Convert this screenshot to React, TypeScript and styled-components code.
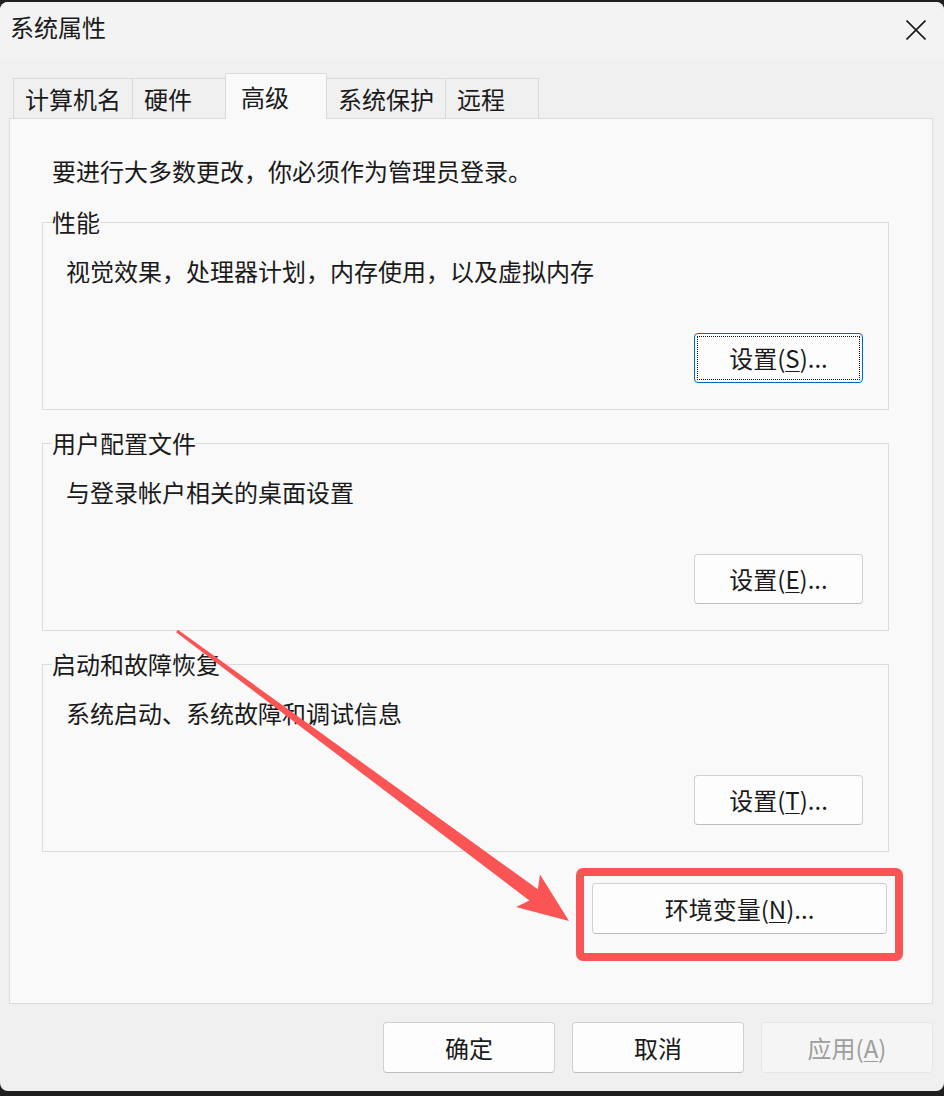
import React from 'react'
import styled, { createGlobalStyle } from 'styled-components'

const GlobalStyle = createGlobalStyle`
  html, body {
    margin: 0;
    padding: 0;
    background: #1f1f1f;
  }
  body {
    font-family: "Noto Sans CJK SC", "Microsoft YaHei", sans-serif;
    color: #1a1a1a;
  }
  * {
    box-sizing: border-box;
  }
`

const tabs = ['计算机名', '硬件', '高级', '系统保护', '远程']

const groups = [
  { title: '性能', desc: '视觉效果，处理器计划，内存使用，以及虚拟内存', key: 'S', focused: true },
  { title: '用户配置文件', desc: '与登录帐户相关的桌面设置', key: 'E' },
  { title: '启动和故障恢复', desc: '系统启动、系统故障和调试信息', key: 'T' },
]

function CloseIcon() {
  return (
    <svg width="20" height="20" viewBox="0 0 20 20">
      <path d="M0.5 0.5 L19.5 19.5 M19.5 0.5 L0.5 19.5" stroke="#1a1a1a" strokeWidth="1.6" />
    </svg>
  )
}

// red callout: tapered arrow + box round the env-vars button
function Callout() {
  return (
    <Overlay width="944" height="1096" viewBox="0 0 944 1096">
      <polygon
        points="176.1,632.2 529.4,900.4 516,907 569,921 540,874.5 537.8,889.2 177.9,629.8"
        fill="#fb5454"
      />
      <rect x="580" y="872" width="319" height="85" rx="3" fill="none" stroke="#fb5454" strokeWidth="8" />
    </Overlay>
  )
}

export default function App() {
  return (
    <Stage>
      <GlobalStyle />
      <Window>
        <TitleBar>
          <Title>系统属性</Title>
          <CloseIcon />
        </TitleBar>
        <Body>
          <TabRow>
            {tabs.map((t, i) => (
              <Tab key={t} $active={i === 2}>
                {t}
              </Tab>
            ))}
          </TabRow>
          <Panel>
            <Intro>要进行大多数更改，你必须作为管理员登录。</Intro>
            {groups.map((g, i) => (
              <Group key={g.title} $last={i === groups.length - 1}>
                <Legend>{g.title}</Legend>
                <Desc>{g.desc}</Desc>
                <ButtonRow>
                  <Button $w={169} $h={50} $focused={g.focused}>
                    设置(<Key>{g.key}</Key>)...
                  </Button>
                </ButtonRow>
              </Group>
            ))}
            <EnvRow>
              <Button $w={295} $h={51}>
                环境变量(<Key>N</Key>)...
              </Button>
            </EnvRow>
          </Panel>
          <Footer>
            <Button $w={172} $h={51}>确定</Button>
            <Button $w={172} $h={51}>取消</Button>
            <Button $w={172} $h={51} $disabled>
              应用(<Key>A</Key>)
            </Button>
          </Footer>
        </Body>
      </Window>
      <Callout />
    </Stage>
  )
}

const Stage = styled.div`
  position: relative;
  width: 944px;
  height: 1096px;
  padding-top: 2px;
  overflow: hidden;
`

const Window = styled.div`
  height: 1089px;
  background: #f0f0f0;
  border-radius: 8px;
  overflow: hidden;
  display: flex;
  flex-direction: column;
`

const TitleBar = styled.div`
  height: 55px;
  flex: none;
  background: #f3f3f3;
  display: flex;
  align-items: center;
  justify-content: space-between;
  padding: 0 18px 0 10px;
  font-size: 24px;
  line-height: 1;
`

const Title = styled.span`
  margin-top: -5px;
`

const Body = styled.div`
  flex: 1;
  padding: 16px 11px 0 9px;
  display: flex;
  flex-direction: column;
`

const TabRow = styled.div`
  position: relative;
  z-index: 1;
  display: flex;
  align-items: flex-end;
  height: 46px;
  margin-bottom: -1px;
  padding-left: 4px;
`

const Tab = styled.div<{ $active?: boolean }>`
  display: flex;
  align-items: center;
  height: ${p => (p.$active ? 46 : 40)}px;
  margin-bottom: ${p => (p.$active ? 0 : 1)}px;
  min-width: ${p => (p.$active ? 102 : 94)}px;
  padding: 0 11px 0 ${p => (p.$active ? 15 : 11)}px;
  border: 1px solid #dadada;
  border-bottom: none;
  background: ${p => (p.$active ? '#f9f9f9' : '#f0f0f0')};
  font-size: 24px;
  line-height: 1;

  & + & {
    margin-left: -1px;
  }
`

const Panel = styled.div`
  height: 886px;
  background: #f9f9f9;
  border: 1px solid #dcdcdc;
  padding: 36px 43px 0 32px;
`

const Intro = styled.div`
  font-size: 24px;
  line-height: 32px;
  padding-left: 10px;
  margin-bottom: 23px;
`

const Group = styled.fieldset<{ $last?: boolean }>`
  margin: 0 0 ${p => (p.$last ? 31 : 21)}px;
  padding: 0 0 26px;
  min-width: 0;
  border: 1px solid #dcdcdc;
`

const Legend = styled.legend`
  padding: 0;
  margin-left: 9px;
  font-size: 24px;
  line-height: 24px;
`

const Desc = styled.div`
  margin: 21px 0 0 23px;
  font-size: 24px;
  line-height: 32px;
`

const ButtonRow = styled.div`
  display: flex;
  justify-content: flex-end;
  margin-top: 46px;
  padding-right: 25px;
`

const EnvRow = styled.div`
  display: flex;
  justify-content: flex-end;
  padding-right: 2px;
`

const Button = styled.div<{ $w: number; $h: number; $focused?: boolean; $disabled?: boolean }>`
  width: ${p => p.$w}px;
  height: ${p => p.$h}px;
  display: flex;
  align-items: center;
  justify-content: center;
  border: 1px solid ${p => (p.$focused ? '#0067c0' : p.$disabled ? '#e6e6e6' : '#d0d0d0')};
  border-bottom-color: ${p => (p.$focused ? '#0067c0' : p.$disabled ? '#e6e6e6' : '#bdbdbd')};
  border-radius: 4px;
  background: ${p => (p.$disabled ? '#f5f5f5' : '#fdfdfd')};
  color: ${p => (p.$disabled ? '#9e9e9e' : '#1a1a1a')};
  font-size: 24px;
  line-height: 1;
  ${p =>
    p.$focused &&
    `
    outline: 1px dotted #111;
    outline-offset: -4px;
  `}
`

const Key = styled.span`
  text-decoration: underline;
  text-underline-offset: 3px;
  text-decoration-thickness: 1px;
`

const Footer = styled.div`
  display: flex;
  justify-content: flex-end;
  gap: 17px;
  margin-top: 18px;
`

const Overlay = styled.svg`
  position: absolute;
  top: 0;
  left: 0;
  pointer-events: none;
`
